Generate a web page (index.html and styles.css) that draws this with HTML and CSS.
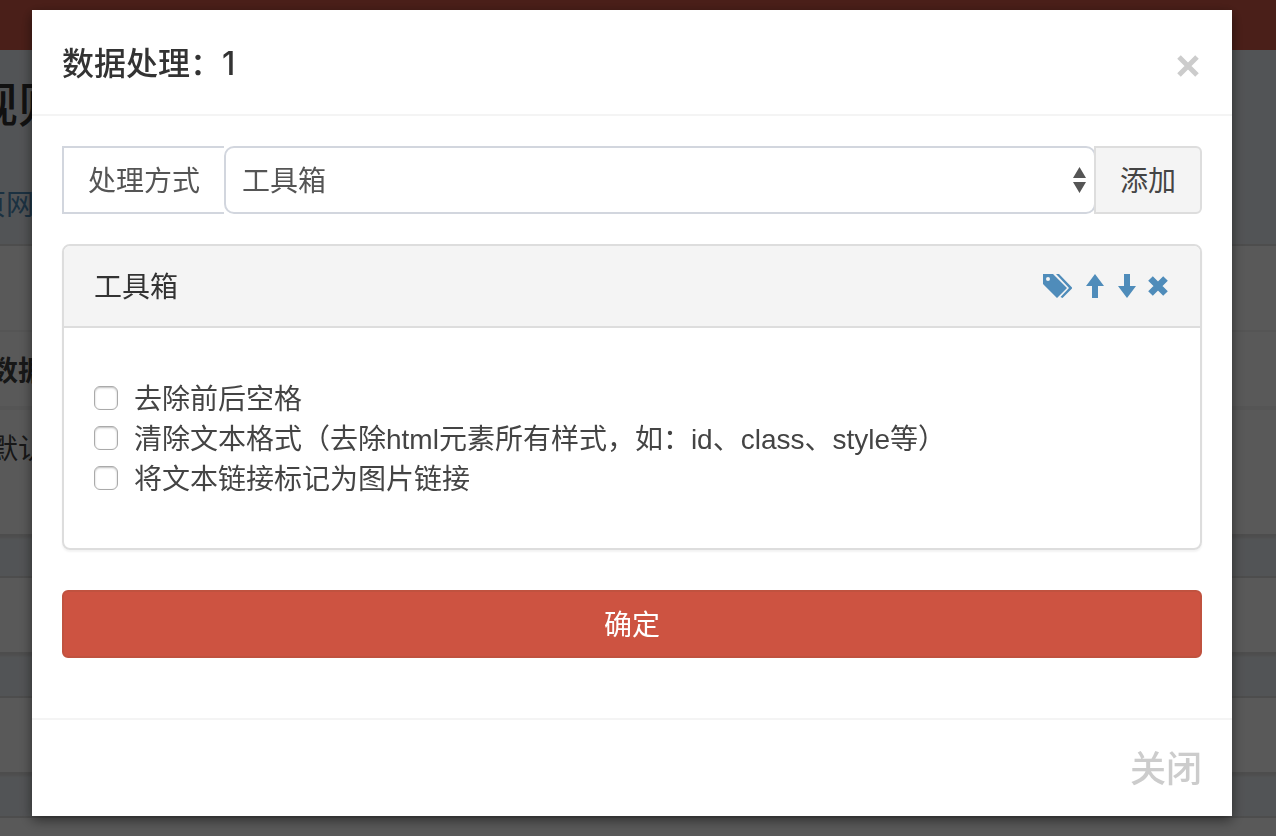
FILE: index.html
```html
<!DOCTYPE html>
<html lang="zh-CN">
<head>
    <meta charset="UTF-8">
    <meta name="viewport" content="width=device-width, initial-scale=1.0">
    <title>数据处理</title>
    <link rel="stylesheet" href="styles.css">
</head>
<body>
    <div class="page">
        <header class="navbar"></header>
        <h1 class="page-title">规则</h1>
        <nav class="tabs"><a href="#">首页网</a></nav>

        <section class="box">
            <div class="box-header"></div>
            <table class="rules">
                <tr><th>数据</th></tr>
                <tr><td>默认</td></tr>
            </table>
        </section>
        <section class="box box-collapsed"></section>
        <section class="box box-collapsed"></section>
        <section class="box box-collapsed"></section>
    </div>

    <div class="backdrop">
        <div class="modal" role="dialog" aria-labelledby="modal-title">
            <div class="modal-header">
                <h2 id="modal-title">数据处理：1</h2>
                <button type="button" class="close" aria-label="关闭">
                    <svg width="24" height="24" viewBox="0 0 24 24"><path d="M3 3L21 21M21 3L3 21" stroke="currentColor" stroke-width="5"/></svg>
                </button>
            </div>

            <div class="modal-body">
                <div class="input-group">
                    <label class="addon" for="process">处理方式</label>
                    <div class="select-wrap">
                        <select id="process">
                            <option>工具箱</option>
                        </select>
                        <svg class="arrows" width="14" height="26" viewBox="0 0 14 26"><path d="M7.5 0L14 11H1ZM1 15H14L7.5 26Z" fill="#555"/></svg>
                    </div>
                    <button type="button" class="btn-add">添加</button>
                </div>

                <div class="panel">
                    <div class="panel-heading">
                        <span>工具箱</span>
                        <div class="tools">
                            <a href="#" aria-label="标签">
                                <svg width="30" height="26" viewBox="0 0 30 26"><path fill-rule="evenodd" d="M1 1H11L25 15L15 25L1 11V1ZM6 4A2 2 0 1 0 6 8A2 2 0 1 0 6 4Z" fill="currentColor"/><path d="M14 1H17L30.500 15L20.500 25L18.500 24L27 15Z" fill="currentColor"/></svg>
                            </a>
                            <a href="#" aria-label="上移">
                                <svg width="20" height="26" viewBox="0 0 20 26"><path d="M11 1L20 13H14V25H8V13H2Z" fill="currentColor"/></svg>
                            </a>
                            <a href="#" aria-label="下移">
                                <svg width="20" height="26" viewBox="0 0 20 26"><path d="M8 1H14V13H20L11 25L2 13H8Z" fill="currentColor"/></svg>
                            </a>
                            <a href="#" aria-label="删除">
                                <svg width="20" height="26" viewBox="0 0 20 26"><path d="M2.500 5.500L17.500 20.500M17.500 5.500L2.500 20.500" stroke="currentColor" stroke-width="6.500"/></svg>
                            </a>
                        </div>
                    </div>
                    <div class="panel-body">
                        <label class="check"><input type="checkbox">去除前后空格</label>
                        <label class="check"><input type="checkbox">清除文本格式（去除html元素所有样式，如：id、class、style等）</label>
                        <label class="check"><input type="checkbox">将文本链接标记为图片链接</label>
                    </div>
                </div>

                <button type="button" class="btn-submit">确定</button>
            </div>

            <div class="modal-footer">
                <button type="button" class="btn-close">关闭</button>
            </div>
        </div>
    </div>
</body>
</html>
```
FILE: styles.css
```css
* {
    box-sizing: border-box;
}

body {
    margin: 0;
    height: 100vh;
    overflow: hidden;
    background-color: #ecf0f5;
    color: #444;
    font-family: "Liberation Sans", "Noto Sans CJK SC", sans-serif;
    font-size: 28px;
    line-height: 40px;
}

button,
select {
    font: inherit;
    color: inherit;
}

button {
    cursor: pointer;
}

a {
    color: #4f8cba;
    text-decoration: none;
}

svg {
    display: block;
}

/* page behind the dialog, scrolled a little to the right */
.page {
    margin-left: -50px;
}

.navbar {
    height: 50px;
    background-color: #d55a48;
}

.page-title {
    margin: 0;
    padding: 24px 20px;
    font-size: 48px;
    font-weight: 500;
    line-height: 64px;
    color: #333;
}

.tabs {
    height: 82px;
    padding-top: 24px;
}

.box {
    margin-bottom: 40px;
    background-color: #fff;
    border-top: 2px solid #ddd;
    border-bottom: 2px solid #ddd;
    box-shadow: 0 2px 2px #ddd;
}

.box-header {
    height: 84px;
}

.box-collapsed {
    height: 78px;
    margin-bottom: 42px;
}

.rules {
    width: 100%;
    border-collapse: collapse;
}

.rules th,
.rules td {
    padding: 20px 40px 14px;
    text-align: left;
    vertical-align: top;
    border-top: 2px solid #f4f4f4;
}

.rules td {
    height: 126px;
    border-top: 4px solid #f4f4f4;
}

/* dialog */
.backdrop {
    position: fixed;
    inset: 0;
    overflow: hidden;
    background-color: rgba(0, 0, 0, 0.65);
}

.modal {
    margin: 10px 44px 20px 32px;
    background-color: #fff;
    box-shadow: 0 4px 12px rgba(0, 0, 0, 0.5);
}

.modal-header {
    display: flex;
    justify-content: space-between;
    align-items: center;
    padding: 34px 30px 30px;
    border-bottom: 2px solid #f4f4f4;
}

.modal-header h2 {
    margin: 0;
    font-family: Inter, "Noto Sans CJK SC", sans-serif;
    font-size: 32px;
    font-weight: 500;
    line-height: 40px;
    color: #333;
}

.close {
    padding: 4px 2px 0;
    border: none;
    background: none;
    color: #ccc;
}

.modal-body {
    padding: 30px 30px 60px;
}

.input-group {
    display: flex;
    margin-bottom: 30px;
}

.addon {
    padding: 14px 24px 10px;
    border: 2px solid #d2d6de;
    border-right: none;
    color: #555;
}

.select-wrap {
    position: relative;
    flex: 1;
    margin-right: -2px;
}

.select-wrap select {
    appearance: none;
    width: 100%;
    height: 68px;
    padding: 4px 40px 0 16px;
    border: 2px solid #d2d6de;
    border-radius: 10px;
    background-color: #fff;
    color: #555;
}

.arrows {
    position: absolute;
    top: 21px;
    right: 10px;
    pointer-events: none;
}

.btn-add {
    position: relative;
    padding: 14px 24px 10px;
    border: 2px solid #ddd;
    border-radius: 0 6px 6px 0;
    background-color: #f4f4f4;
}

.panel {
    margin-bottom: 40px;
    border: 2px solid #ddd;
    border-radius: 8px;
    box-shadow: 0 2px 2px rgba(0, 0, 0, 0.05);
}

.panel-heading {
    display: flex;
    justify-content: space-between;
    align-items: center;
    padding: 22px 30px 18px;
    border-bottom: 2px solid #ddd;
    border-radius: 6px 6px 0 0;
    background-color: #f4f4f4;
    color: #333;
}

.tools {
    display: flex;
    gap: 12px;
    padding: 0 2px 4px 0;
}

.panel-body {
    padding: 52px 30px 48px;
}

.check {
    display: flex;
    align-items: center;
}

.check input {
    appearance: none;
    width: 24px;
    height: 24px;
    margin: 0 16px 4px 0;
    border: 1px solid #aaa;
    border-radius: 6px;
    background-color: #fff;
    box-shadow: inset 0 1px 2px rgba(0, 0, 0, 0.25);
}

.check input:checked {
    background-color: #4f8cba;
}

.btn-submit {
    display: block;
    width: 100%;
    padding: 14px 24px 10px;
    border: 2px solid #c0523f;
    border-radius: 6px;
    background-color: #cd5341;
    color: #fff;
}

.modal-footer {
    display: flex;
    justify-content: flex-end;
    padding: 30px 30px 26px;
    border-top: 2px solid #f4f4f4;
}

.btn-close {
    padding: 0;
    border: none;
    background: none;
    font-size: 36px;
    font-weight: 500;
    line-height: 40px;
    color: #ccc;
}
```
